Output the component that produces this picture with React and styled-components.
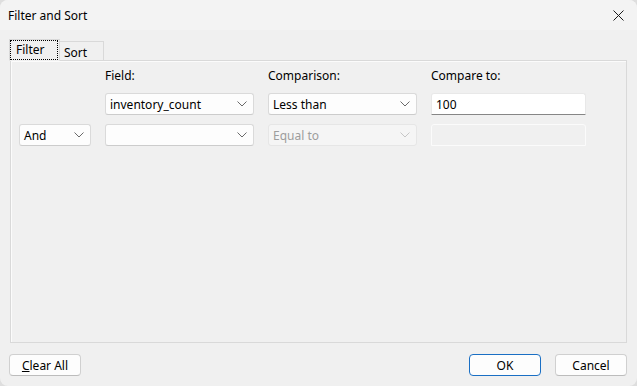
import React from 'react';
import styled, { createGlobalStyle } from 'styled-components';

const GlobalStyle = createGlobalStyle`
  html, body {
    margin: 0;
    padding: 0;
    background: #dedede;
  }
  body {
    font-family: "Noto Sans", "Open Sans", sans-serif;
    font-size: 12px;
    color: #000;
  }
`;

const Window = styled.div`
  width: 637px;
  height: 386px;
  box-sizing: border-box;
  background: #f0f0f0;
  border-radius: 8px;
  overflow: hidden;
  display: flex;
  flex-direction: column;
`;

const TitleBar = styled.div`
  height: 30px;
  flex: none;
  display: flex;
  align-items: center;
  justify-content: space-between;
  padding: 0 0 0 8px;
  background: #f3f3f3;
  font-size: 12px;
`;

const CloseButton = styled.div`
  width: 46px;
  height: 30px;
  display: flex;
  align-items: center;
  justify-content: center;
  margin-right: -4px;
`;

const Body = styled.div`
  flex: 1;
  display: flex;
  flex-direction: column;
  padding: 10px;
  min-height: 0;
`;

const TabStrip = styled.div`
  display: flex;
  align-items: flex-end;
  height: 21px;
  position: relative;
  z-index: 1;
  margin-bottom: -1px;
`;

const Tab = styled.div`
  box-sizing: border-box;
  height: ${p => (p.$active ? '22px' : '20px')};
  width: ${p => p.$width}px;
  margin-left: ${p => (p.$active ? '-1px' : '0')};
  padding-left: ${p => (p.$active ? '1px' : '4px')};
  display: flex;
  align-items: center;
  background: #f0f0f0;
  border: 1px solid #d9d9d9;
  border-bottom: ${p => (p.$active ? '1px solid #f0f0f0' : '1px solid #d9d9d9')};
  border-left: ${p => (p.$active ? '1px solid #d9d9d9' : 'none')};
  line-height: 16px;
`;

const TabLabel = styled.span`
  display: inline-block;
  box-sizing: border-box;
  padding: 0 ${p => (p.$focused ? '5px' : '0')};
  width: ${p => (p.$focused ? '46px' : 'auto')};
  height: ${p => (p.$focused ? '18px' : 'auto')};
  line-height: ${p => (p.$focused ? '17px' : '16px')};
  outline: ${p => (p.$focused ? '1px dotted #000' : 'none')};
  margin-top: ${p => (p.$focused ? '0' : '3px')};
`;

const TabPanel = styled.div`
  flex: 1;
  border: 1px solid #d9d9d9;
  box-shadow: inset 1px 1px 0 #fbfbfb;
  padding: 7px 0 0 8px;
`;

const FilterGrid = styled.div`
  display: grid;
  grid-template-columns: 72px 149px 149px 155px;
  grid-template-rows: 16px 22px 22px;
  column-gap: 14px;
  row-gap: 9px;
`;

const HeaderLabel = styled.div`
  grid-column: ${p => p.$col};
  line-height: 16px;
`;

const Spacer = styled.div`
  grid-column: 1;
`;

const ComboBox = styled.div`
  box-sizing: border-box;
  height: 22px;
  display: flex;
  align-items: center;
  justify-content: space-between;
  padding: 0 6px 0 4px;
  background: ${p => (p.$disabled ? '#f5f5f5' : '#fdfdfd')};
  border: 1px solid ${p => (p.$disabled ? '#e6e6e6' : '#dadada')};
  border-bottom-color: ${p => (p.$disabled ? '#e6e6e6' : '#cccccc')};
  border-radius: 3px;
  color: ${p => (p.$disabled ? '#9d9d9d' : '#000')};
  white-space: nowrap;
`;

const Chevron = ({ color }) => (
  <svg width="10" height="6" viewBox="0 0 10 6">
    <path d="M0.5 0.5 L5 5 L9.5 0.5" fill="none" stroke={color} strokeWidth="1" />
  </svg>
);

const TextInput = styled.div`
  box-sizing: border-box;
  height: 22px;
  display: flex;
  align-items: center;
  padding: 0 4px;
  background: ${p => (p.$disabled ? '#f0f0f0' : '#ffffff')};
  border: 1px solid ${p => (p.$disabled ? '#fbfbfb' : '#e8e8e8')};
  border-bottom: 1px solid ${p => (p.$disabled ? '#fbfbfb' : '#868686')};
  border-radius: 3px 3px 0 0;
`;

const Footer = styled.div`
  flex: none;
  display: flex;
  justify-content: space-between;
  align-items: center;
  padding-top: 11px;
  margin-left: -1px;
`;

const ButtonGroup = styled.div`
  display: flex;
  gap: 14px;
`;

const Button = styled.button`
  box-sizing: border-box;
  width: 72px;
  height: 22px;
  padding: 0;
  font: inherit;
  color: #000;
  background: #fdfdfd;
  border: 1px solid ${p => (p.$primary ? '#1a6fc4' : '#d0d0d0')};
  border-bottom-color: ${p => (p.$primary ? '#1a6fc4' : '#bcbcbc')};
  border-radius: 4px;
  u {
    text-decoration: underline;
  }
`;

export default function App() {
  return (
    <>
      <GlobalStyle />
      <Window>
        <TitleBar>
          <span>Filter and Sort</span>
          <CloseButton>
            <svg width="11" height="11" viewBox="0 0 11 11">
              <path d="M0.5 0.5 L10.5 10.5 M10.5 0.5 L0.5 10.5" stroke="#1a1a1a" strokeWidth="1" />
            </svg>
          </CloseButton>
        </TitleBar>
        <Body>
          <TabStrip>
            <Tab $active $width={51}>
              <TabLabel $focused>Filter</TabLabel>
            </Tab>
            <Tab $width={44}>
              <TabLabel>Sort</TabLabel>
            </Tab>
          </TabStrip>
          <TabPanel>
            <FilterGrid>
              <HeaderLabel $col={2}>Field:</HeaderLabel>
              <HeaderLabel $col={3}>Comparison:</HeaderLabel>
              <HeaderLabel $col={4}>Compare to:</HeaderLabel>

              <Spacer />
              <ComboBox>
                inventory_count
                <Chevron color="#6a6a6a" />
              </ComboBox>
              <ComboBox>
                Less than
                <Chevron color="#6a6a6a" />
              </ComboBox>
              <TextInput>100</TextInput>

              <ComboBox>
                And
                <Chevron color="#6a6a6a" />
              </ComboBox>
              <ComboBox>
                <span />
                <Chevron color="#6a6a6a" />
              </ComboBox>
              <ComboBox $disabled>
                Equal to
                <Chevron color="#c6c6c6" />
              </ComboBox>
              <TextInput $disabled />
            </FilterGrid>
          </TabPanel>
          <Footer>
            <Button>
              <u>C</u>lear All
            </Button>
            <ButtonGroup>
              <Button $primary>OK</Button>
              <Button>Cancel</Button>
            </ButtonGroup>
          </Footer>
        </Body>
      </Window>
    </>
  );
}
